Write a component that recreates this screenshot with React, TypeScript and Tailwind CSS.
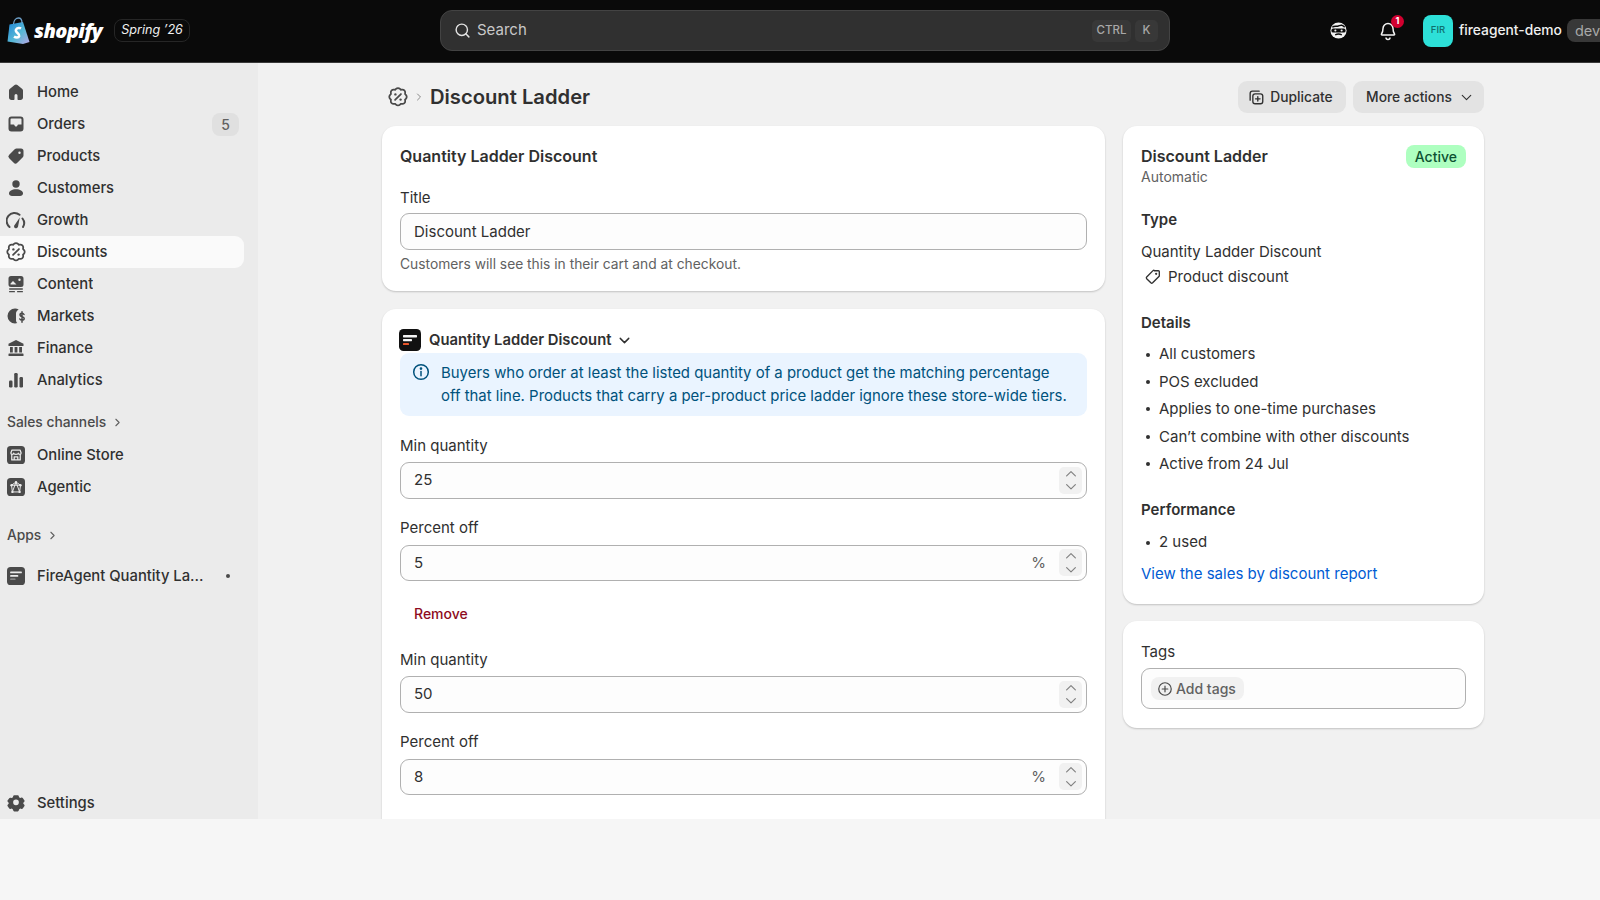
import React from "react";
import { ChevronDown, ChevronRight, ChevronUp, Search } from "lucide-react";

const I = ({ children, box = "0 0 20 20" }: { children: React.ReactNode; box?: string }) => (
  <svg viewBox={box} className="w-[20px] h-[20px] shrink-0" fill="#4a4a4a">{children}</svg>
);

const discountShape = (
  <>
    <path fill="none" stroke="#4a4a4a" strokeWidth="1.500" d="M8.300 3.100a2.400 2.400 0 0 1 3.400 0l.7.7 1-.1a2.400 2.400 0 0 1 2.700 2.700l-.1 1 .7.7a2.400 2.400 0 0 1 0 3.400l-.7.7.1 1a2.400 2.400 0 0 1-2.700 2.700l-1-.1-.7.7a2.400 2.400 0 0 1-3.400 0l-.7-.7-1 .1a2.400 2.400 0 0 1-2.700-2.700l.1-1-.7-.7a2.400 2.400 0 0 1 0-3.400l.7-.7-.1-1a2.400 2.400 0 0 1 2.700-2.700l1 .1.700-.7Z" />
    <path fill="none" stroke="#4a4a4a" strokeWidth="1.500" strokeLinecap="round" d="m12.500 7.500-5 5" />
    <circle cx="7.800" cy="7.800" r="1" />
    <circle cx="12.200" cy="12.200" r="1" />
  </>
);

const icons: Record<string, React.ReactNode> = {
  Home: <I><path d="M10 2.500c-.5 0-1 .2-1.400.5L3.700 7c-.5.4-.7 1-.7 1.600V15.500C3 16.900 4.100 18 5.500 18H7.500c.6 0 1-.4 1-1v-3.500a1.500 1.500 0 0 1 3 0V17c0 .6.400 1 1 1h2c1.400 0 2.500-1.100 2.500-2.500V8.600c0-.6-.3-1.200-.7-1.600L11.400 3c-.4-.3-.9-.5-1.400-.5Z" /></I>,
  Orders: <I><path fillRule="evenodd" d="M5.500 2.500A3 3 0 0 0 2.500 5.500v9a3 3 0 0 0 3 3h9a3 3 0 0 0 3-3v-9a3 3 0 0 0-3-3h-9ZM4.500 5.500a1 1 0 0 1 1-1h9a1 1 0 0 1 1 1V10.500h-3c-.6 0-1 .4-1.100.9-.2.6-.7 1.100-1.400 1.100s-1.200-.5-1.400-1.100c-.1-.5-.5-.9-1.100-.9h-3V5.500Z" /></I>,
  Products: <I><path d="M10.500 2.500h4.500A2.500 2.500 0 0 1 17.500 5v4.500c0 .7-.3 1.300-.7 1.800l-5.500 5.500a2.500 2.500 0 0 1-3.600 0l-4.500-4.500a2.500 2.500 0 0 1 0-3.600l5.500-5.500c.5-.4 1.100-.7 1.800-.7Zm3 3a1.200 1.200 0 1 0 0 2.400 1.200 1.200 0 0 0 0-2.400Z" /></I>,
  Customers: <I><circle cx="10" cy="6" r="3.700" /><path d="M3 15.200c0-2.300 3-4 7-4s7 1.700 7 4c0 1.700-1.300 2.800-3 2.800H6c-1.700 0-3-1.100-3-2.800Z" /></I>,
  Growth: <I><path fill="none" stroke="#4a4a4a" strokeWidth="2" strokeLinecap="round" d="M3.500 17A7.500 7.500 0 0 1 13.500 4.800M16.500 8.500A7.500 7.500 0 0 1 17 17" /><path d="M13.800 7.500 8.800 14.700a2 2 0 1 0 3.200 2L13.800 7.500Z" /></I>,
  Discounts: <I box="1.500 1.500 17 17">{discountShape}</I>,
  Content: <I><path fillRule="evenodd" d="M5 2A2.500 2.500 0 0 0 2.500 4.500v6A2.500 2.500 0 0 0 5 13h10a2.500 2.500 0 0 0 2.500-2.500v-6A2.500 2.500 0 0 0 15 2H5Zm8.500 2.500a1.200 1.200 0 1 0 0 2.400 1.200 1.200 0 0 0 0-2.400ZM4.500 9.500 7 7l3.500 3.500H4.500v-1Z" /><rect x="3" y="14.300" width="14" height="1.500" rx=".7" /><rect x="3" y="17" width="6" height="1.300" rx=".6" /><rect x="11" y="17" width="6" height="1.300" rx=".6" /></I>,
  Markets: <I><path d="M9 2.500a7.500 7.500 0 0 0 0 15c.8 0 1.600-.1 2.300-.4-.8-.7-1.300-1.800-1.300-3V7.500c0-1.800 1.100-3.400 2.700-4.100A7.400 7.400 0 0 0 9 2.500Z" /><path fill="none" stroke="#4a4a4a" strokeWidth="1.500" strokeLinecap="round" d="M18 8.500c-.4-.8-1.100-1.200-2-1.200-1.100 0-2 .7-2 1.700 0 2.300 4.200 1.200 4.200 3.500 0 1-1 1.700-2.200 1.700-1 0-1.800-.5-2.200-1.200M16 5.800v10.500" /></I>,
  Finance: <I><path d="M10 2 2.500 5.800V8h15V5.800L10 2Z" /><rect x="4" y="9" width="2.800" height="5.500" /><rect x="8.600" y="9" width="2.800" height="5.500" /><rect x="13.200" y="9" width="2.800" height="5.500" /><rect x="2.500" y="15.500" width="15" height="2.500" rx=".6" /></I>,
  Analytics: <I><rect x="3" y="10.500" width="3.500" height="7" rx="1.200" /><rect x="8.200" y="3" width="3.500" height="14.500" rx="1.200" /><rect x="13.500" y="7" width="3.500" height="10.500" rx="1.200" /></I>,
  "Online Store": (
    <svg viewBox="0 0 20 20" className="w-[18px] h-[18px] ml-[1px] shrink-0"><rect width="20" height="20" rx="4" fill="#4a4a4a" /><path fill="none" stroke="#ebebeb" strokeWidth="1.400" strokeLinejoin="round" d="M5.500 4.500h9l1.200 3.200c0 1-.8 1.500-1.500 1.500s-1.600-.5-1.600-1.200c0 .7-.9 1.200-2.600 1.200S7.400 8.700 7.400 8c0 .7-.9 1.200-1.600 1.200s-1.500-.5-1.500-1.500L5.500 4.500ZM5.300 9.500v6h9.400v-6M8 15.500v-3.500h4v3.500" /></svg>
  ),
  Agentic: (
    <svg viewBox="0 0 20 20" className="w-[18px] h-[18px] ml-[1px] shrink-0"><rect width="20" height="20" rx="4" fill="#4a4a4a" /><path fill="none" stroke="#ebebeb" strokeWidth="1.100" d="M10 4.500 5 8l1 7.500h8L15 8l-5-3.500ZM5 8h10M6 15.500 10 4.500l4 11" /><circle cx="10" cy="4.500" r="1.300" fill="#ebebeb" /><circle cx="5" cy="8" r="1.300" fill="#ebebeb" /><circle cx="15" cy="8" r="1.300" fill="#ebebeb" /><circle cx="6" cy="15.500" r="1.300" fill="#ebebeb" /><circle cx="14" cy="15.500" r="1.300" fill="#ebebeb" /></svg>
  ),
  FireAgent: (
    <svg viewBox="0 0 20 20" className="w-[18px] h-[18px] ml-[1px] shrink-0"><rect width="20" height="20" rx="4" fill="#4a4a4a" /><rect x="3.500" y="5" width="13" height="2" rx=".6" fill="#ebebeb" /><rect x="3.500" y="8.800" width="9" height="2" rx=".6" fill="#ebebeb" /><rect x="3.500" y="12.800" width="6" height="1.500" rx=".6" fill="#9a9a9a" /></svg>
  ),
  Settings: <I box="-.5 -.5 21 21"><path fillRule="evenodd" d="M8.100 2.500c-.5 0-.9.300-1 .8l-.3 1.400-1.300.8-1.400-.4c-.5-.1-.9.100-1.200.5L1.100 8.200c-.2.400-.2.900.2 1.200l1 1v1.200l-1 1c-.4.300-.4.800-.2 1.200l1.800 2.700c.3.400.7.600 1.200.5l1.400-.4 1.300.8.300 1.300c.1.500.5.800 1 .8h3.800c.5 0 .9-.3 1-.8l.3-1.300 1.300-.8 1.400.4c.5.100.9-.1 1.200-.5l1.800-2.700c.2-.4.200-.9-.2-1.200l-1-1v-1.200l1-1c.4-.3.400-.8.200-1.200L17.100 5.500c-.3-.4-.7-.6-1.200-.5l-1.400.4-1.300-.8-.3-1.300c-.1-.5-.5-.8-1-.8H8.100ZM10 13a3 3 0 1 0 0-6 3 3 0 0 0 0 6Z" transform="translate(0 -.7)" /></I>,
};

const NavRow = ({ name, label, active, right }: { name: string; label?: string; active?: boolean; right?: React.ReactNode }) => (
  <div className={`h-8 w-[244px] flex items-center pl-[6px] pr-[5px] rounded-r-[9px] ${active ? "bg-[#fafafa]" : ""}`}>
    <div className="w-[20px] flex items-center">{icons[name]}</div>
    <span className="ml-[11px] text-[14.800px] font-[500] text-[#303030] truncate">{label ?? name}</span>
    <div className="ml-auto">{right}</div>
  </div>
);

const SectionHead = ({ label, className }: { label: string; className: string }) => (
  <div className={`h-8 pl-[7px] flex items-center gap-[5px] text-[13.800px] font-[500] text-[#4a4a4a] ${className}`}>
    {label}
    <ChevronRight className="w-[13px] h-[13px] text-[#616161]" />
  </div>
);

const Sidebar = () => (
  <aside className="w-[258px] shrink-0 bg-[#ebebeb] pt-[13px] flex flex-col">
    <NavRow name="Home" />
    <NavRow
      name="Orders"
      right={<span className="w-[27px] h-[23px] rounded-[8px] bg-[#e0e0e0] flex items-center justify-center text-[14px] font-[500] text-[#616161]">5</span>}
    />
    <NavRow name="Products" />
    <NavRow name="Customers" />
    <NavRow name="Growth" />
    <NavRow name="Discounts" active />
    <NavRow name="Content" />
    <NavRow name="Markets" />
    <NavRow name="Finance" />
    <NavRow name="Analytics" />
    <SectionHead label="Sales channels" className="mt-[10px] mb-[1px]" />
    <NavRow name="Online Store" />
    <NavRow name="Agentic" />
    <SectionHead label="Apps" className="mt-[16px] mb-[9px]" />
    <NavRow
      name="FireAgent"
      label="FireAgent Quantity La..."
      right={<span className="block w-[4px] h-[4px] rounded-full bg-[#4a4a4a] mr-[9px]" />}
    />
    <div className="mt-auto"><NavRow name="Settings" /></div>
  </aside>
);

const TopBar = () => (
  <header className="h-[63px] bg-[#0a0a0a] border-b border-[#3a3a3a] flex items-center pb-[1px] relative overflow-hidden">
    <div className="w-[440px] shrink-0 pl-[7px] flex items-center">
      <svg viewBox="0 0 23 27" className="w-[23px] h-[27px] shrink-0">
        <defs><linearGradient id="bag" x1="0" y1="0" x2="1" y2="1"><stop offset="0" stopColor="#1f86d6" /><stop offset=".55" stopColor="#58b9d6" /><stop offset="1" stopColor="#b7a6e4" /></linearGradient></defs>
        <path d="M2.500 7.500 16 5l6.500 20L16 27 .5 24.500 2.500 7.500Z" fill="url(#bag)" />
        <path d="M6.500 7c.3-3.500 2.500-6 5-6s3.500 2.500 3.500 5" fill="none" stroke="#6d9fc8" strokeWidth="1.300" />
        <path d="M14 11.500c-1-.6-4-1-5 1.200-1.200 2.800 4 3.700 3.200 6.500-.6 1.900-3.600 1.500-5.200.5" fill="none" stroke="#fff" strokeWidth="2.600" />
      </svg>
      <span className="ml-[4px] text-[20px] font-[800] italic text-white tracking-[-0.6px] [font-family:'Open_Sans',sans-serif]">shopify</span>
      <span className="ml-[12px] h-[23px] px-[6px] rounded-[8px] border border-[#262626] flex items-center text-[12.600px] italic text-[#f0f0f0] whitespace-nowrap">Spring ’26</span>
    </div>
    <div className="w-[730px] shrink-0 h-[41px] rounded-[12px] bg-[#303030] border border-[#434343] flex items-center pl-[13px] pr-[11px]">
      <Search className="w-[17px] h-[17px] text-[#e3e3e3]" strokeWidth={2} />
      <span className="ml-[6px] text-[15px] text-[#c8c8c8]">Search</span>
      <span className="ml-auto h-[22px] w-[39px] rounded-[5px] bg-[#383838] flex items-center justify-center text-[11.500px] font-[500] text-[#a8a8a8]">CTRL</span>
      <span className="ml-[4px] h-[22px] w-[23px] rounded-[5px] bg-[#383838] flex items-center justify-center text-[11.500px] font-[500] text-[#a8a8a8]">K</span>
    </div>
    <svg viewBox="0 0 20 20" className="w-[19px] h-[19px] ml-[159px] shrink-0">
      <circle cx="10" cy="10" r="8.500" fill="#f3f3f3" />
      <path d="M3.500 6.500C5 5 7 5.500 9 5.500c1.500 0 3-1.500 4.500-1 1 .2 2 1 3 2" fill="none" stroke="#0a0a0a" strokeWidth="1.500" />
      <rect x="2.500" y="8" width="15" height="4.200" rx="2" fill="#0a0a0a" />
      <circle cx="6.700" cy="10" r="1.100" fill="#f3f3f3" /><circle cx="13.300" cy="10" r="1.100" fill="#f3f3f3" />
      <path d="M6.500 14.500c2-1 5-1 7 0" fill="none" stroke="#0a0a0a" strokeWidth="1.500" />
    </svg>
    <div className="relative ml-[30px] shrink-0">
      <svg viewBox="0 0 20 20" className="w-[20px] h-[20px]" fill="none" stroke="#f3f3f3" strokeWidth="1.500" strokeLinejoin="round">
        <path d="M10 2.500a5 5 0 0 0-5 5c0 2.500-.5 4-1.500 5.500-.3.500 0 1 .5 1h12c.5 0 .8-.5.5-1-1-1.500-1.500-3-1.500-5.500a5 5 0 0 0-5-5Z" />
        <path d="M8 16.500a2 2 0 0 0 4 0" />
      </svg>
      <span className="absolute -top-[6px] -right-[6px] w-[13px] h-[13px] rounded-full bg-[#d1002f] flex items-center justify-center text-[9px] font-[700] text-white">1</span>
    </div>
    <div className="ml-[25px] w-[30px] h-[32px] rounded-[8px] bg-[#2de0d8] shrink-0 flex items-center justify-center text-[9.500px] font-[500] text-[#0f6f6c]">FIR</div>
    <span className="ml-[6px] text-[13.800px] font-[500] text-[#f0f0f0] whitespace-nowrap">fireagent-demo</span>
    <span className="ml-[5px] h-[23px] pl-[8px] pr-[8px] rounded-[8px] bg-[#383838] flex items-center text-[14.500px] text-[#a8a8a8] shrink-0">dev</span>
  </header>
);

const Card = ({ children, className = "" }: { children: React.ReactNode; className?: string }) => (
  <section className={`bg-white rounded-[14px] shadow-[0_1px_2px_rgba(0,0,0,0.2)] px-[18px] ${className}`}>{children}</section>
);

const Field = ({ label, value, suffix, gap = "mt-[14px]" }: { label: string; value: string; suffix?: boolean; gap?: string }) => (
  <div className={gap}>
    <div className="h-[32px] flex items-center text-[15px] text-[#303030]">{label}</div>
    <div className="h-[36.500px] rounded-[9px] border border-[#b0b0b0] bg-[#fdfdfd] flex items-center pl-[13px] pr-[4px] text-[15px] text-[#303030]">
      {value}
      {suffix && <span className="ml-auto mr-[13px] text-[#616161]">%</span>}
      <div className={`${suffix ? "" : "ml-auto"} w-[23px] h-[27px] rounded-[5px] bg-[#f1f1f1] flex flex-col items-center justify-center text-[#808080]`}>
        <ChevronUp className="w-[18px] h-[18px] -my-[2px]" strokeWidth={1.600} />
        <ChevronDown className="w-[18px] h-[18px] -my-[2px]" strokeWidth={1.600} />
      </div>
    </div>
  </div>
);

const Head = ({ children, className = "" }: { children: React.ReactNode; className?: string }) => (
  <h3 className={`h-[20px] leading-[20px] font-[600] text-[#303030] ${className}`}>{children}</h3>
);

const Bullets = ({ items }: { items: string[] }) => (
  <ul className="flex flex-col">
    {items.map((t) => (
      <li key={t} className="h-[27.400px] flex items-center text-[15px] text-[#303030]">
        <span className="w-[4px] h-[4px] rounded-full bg-[#303030] ml-[5px] mr-[9px]" />
        {t}
      </li>
    ))}
  </ul>
);

const MainColumn = () => (
  <div className="w-[723px] shrink-0 flex flex-col gap-[18px]">
    <Card className="h-[165px] pt-[20px]">
      <Head className="text-[16px]">Quantity Ladder Discount</Head>
      <div className="mt-[21px] h-[22px] flex items-center text-[15px] text-[#303030]">Title</div>
      <div className="mt-[4px] h-[37px] rounded-[9px] border border-[#b0b0b0] bg-[#fdfdfd] flex items-center pl-[13px] pt-[1px] text-[15px] text-[#303030]">Discount Ladder</div>
      <p className="mt-[4px] text-[13.800px] leading-[20px] text-[#616161]">Customers will see this in their cart and at checkout.</p>
    </Card>
    <Card className="pt-[20px] h-[600px] rounded-b-none">
      <div className="flex items-center h-[22px]">
        <svg viewBox="0 0 22 22" className="w-[22px] h-[22px] shrink-0 -ml-[1px]">
          <rect width="22" height="22" rx="4.500" fill="#111" />
          <rect x="4" y="6" width="14" height="2.400" rx=".6" fill="#f5f5f5" />
          <rect x="4" y="10" width="9" height="2.200" rx=".6" fill="#f5f5f5" />
          <rect x="4" y="14" width="6" height="2" rx=".6" fill="#e8562a" />
        </svg>
        <span className="ml-[8px] text-[14.800px] font-[600] text-[#303030]">Quantity Ladder Discount</span>
        <ChevronDown className="ml-[5px] w-[17px] h-[17px] text-[#303030]" strokeWidth={2} />
      </div>
      <div className="mt-[2px] h-[63px] rounded-[9px] bg-[#eaf4ff] pl-[11px] pt-[9px] flex">
        <svg viewBox="0 0 20 20" className="w-[20px] h-[20px] shrink-0" fill="none" stroke="#00527c" strokeWidth="1.500">
          <circle cx="10" cy="10" r="7.300" />
          <path d="M10 9.500v4.200" strokeLinecap="round" />
          <circle cx="10" cy="6.600" r=".6" fill="#00527c" />
        </svg>
        <p className="ml-[10px] w-[630px] text-[14.950px] leading-[23px] text-[#00527c]">
          Buyers who order at least the listed quantity of a product get the matching percentage off that line. Products that carry a per-product price ladder ignore these store-wide tiers.
        </p>
      </div>
      <Field label="Min quantity" value="25" />
      <Field label="Percent off" value="5" suffix />
      <div className="mt-[22px] ml-[14px] h-[20px] flex items-center text-[14px] font-[500] text-[#8e0b21]">Remove</div>
      <Field label="Min quantity" value="50" gap="mt-[21px]" />
      <Field label="Percent off" value="8" suffix />
    </Card>
  </div>
);

const SideColumn = () => (
  <div className="w-[361px] shrink-0 flex flex-col gap-[17px]">
    <Card className="h-[478px] pt-[20px]">
      <div className="flex items-start justify-between">
        <div>
          <Head className="text-[16px]">Discount Ladder</Head>
          <p className="mt-[1px] h-[20px] leading-[20px] text-[14px] text-[#616161]">Automatic</p>
        </div>
        <span className="h-[23px] -mt-[1px] px-[9px] rounded-[8px] bg-[#aeffc0] flex items-center text-[14px] font-[500] text-[#0c5132]">Active</span>
      </div>
      <Head className="mt-[23px] text-[15px]">Type</Head>
      <p className="mt-[12px] h-[20px] leading-[20px] text-[15px] text-[#303030]">Quantity Ladder Discount</p>
      <div className="mt-[5px] h-[20px] flex items-center text-[15px] text-[#303030]">
        <svg viewBox="0 0 20 20" className="w-[18px] h-[18px] ml-[3px]" fill="none" stroke="#303030" strokeWidth="1.500" strokeLinejoin="round">
          <path d="M11.500 3H16a1 1 0 0 1 1 1v4.500c0 .4-.2.8-.4 1l-7 7a1.500 1.500 0 0 1-2 0l-4.600-4.600a1.500 1.500 0 0 1 0-2l7-7c.2-.2.600-.4 1-.4Z" />
          <circle cx="13.500" cy="6.500" r=".5" fill="#303030" />
        </svg>
        <span className="ml-[6px]">Product discount</span>
      </div>
      <Head className="mt-[26px] text-[15px]">Details</Head>
      <div className="mt-[8px]">
        <Bullets items={["All customers", "POS excluded", "Applies to one-time purchases", "Can’t combine with other discounts", "Active from 24 Jul"]} />
      </div>
      <Head className="mt-[22px] text-[15px]">Performance</Head>
      <div className="mt-[9px]"><Bullets items={["2 used"]} /></div>
      <div className="mt-[8px] h-[20px] leading-[20px] text-[15px] text-[#005bd3]">View the sales by discount report</div>
    </Card>
    <Card className="h-[107px] pt-[21px]">
      <div className="h-[20px] leading-[20px] text-[15px] text-[#303030]">Tags</div>
      <div className="mt-[6px] h-[41px] rounded-[9px] border border-[#b0b0b0] bg-[#fdfdfd] flex items-center pl-[9px]">
        <span className="h-[23px] pl-[6px] pr-[8px] rounded-[8px] bg-[#f1f1f1] flex items-center gap-[3px] text-[14px] font-[500] text-[#616161]">
          <svg viewBox="0 0 20 20" className="w-[16px] h-[16px]" fill="none" stroke="#4a4a4a" strokeWidth="1.500" strokeLinecap="round">
            <circle cx="10" cy="10" r="7.800" />
            <path d="M10 6.500v7M6.500 10h7" />
          </svg>
          Add tags
        </span>
      </div>
    </Card>
  </div>
);

const Content = () => (
  <main className="flex-1 bg-[#f1f1f1] pl-[124px] pt-[18px] overflow-hidden">
    <div className="w-[1102px] h-[32px] flex items-center">
      <div className="w-[20px] ml-[6px] flex justify-center">{icons.Discounts}</div>
      <ChevronRight className="ml-[5px] w-[12px] h-[12px] text-[#8a8a8a]" />
      <h1 className="ml-[5px] text-[20.200px] font-[600] text-[#303030]">Discount Ladder</h1>
      <button className="ml-auto h-[32px] w-[108px] rounded-[9px] bg-[#e3e3e3] flex items-center justify-center gap-[5px] text-[13.800px] font-[500] text-[#303030] pr-[4px]">
        <svg viewBox="0 0 20 20" className="w-[18px] h-[18px]" fill="none" stroke="#303030" strokeWidth="1.500" strokeLinecap="round">
          <path d="M13.500 3.500H6A2.500 2.500 0 0 0 3.500 6v7.500" />
          <rect x="6.500" y="6.500" width="11" height="11" rx="2.500" />
          <path d="M12 9.500v5M9.500 12h5" />
        </svg>
        Duplicate
      </button>
      <button className="ml-[7px] h-[32px] w-[131px] rounded-[9px] bg-[#e3e3e3] flex items-center justify-center gap-[6px] text-[13.800px] font-[500] text-[#303030] pl-[4px]">
        More actions
        <ChevronDown className="w-[17px] h-[17px]" strokeWidth={1.600} />
      </button>
    </div>
    <div className="mt-[13px] flex gap-[18px]">
      <MainColumn />
      <SideColumn />
    </div>
  </main>
);

export default function App() {
  return (
    <div className="w-[1600px] h-[900px] bg-[#f6f6f6] overflow-hidden [font-family:Inter,sans-serif]">
      <TopBar />
      <div className="h-[756px] flex overflow-hidden">
        <Sidebar />
        <Content />
      </div>
    </div>
  );
}
